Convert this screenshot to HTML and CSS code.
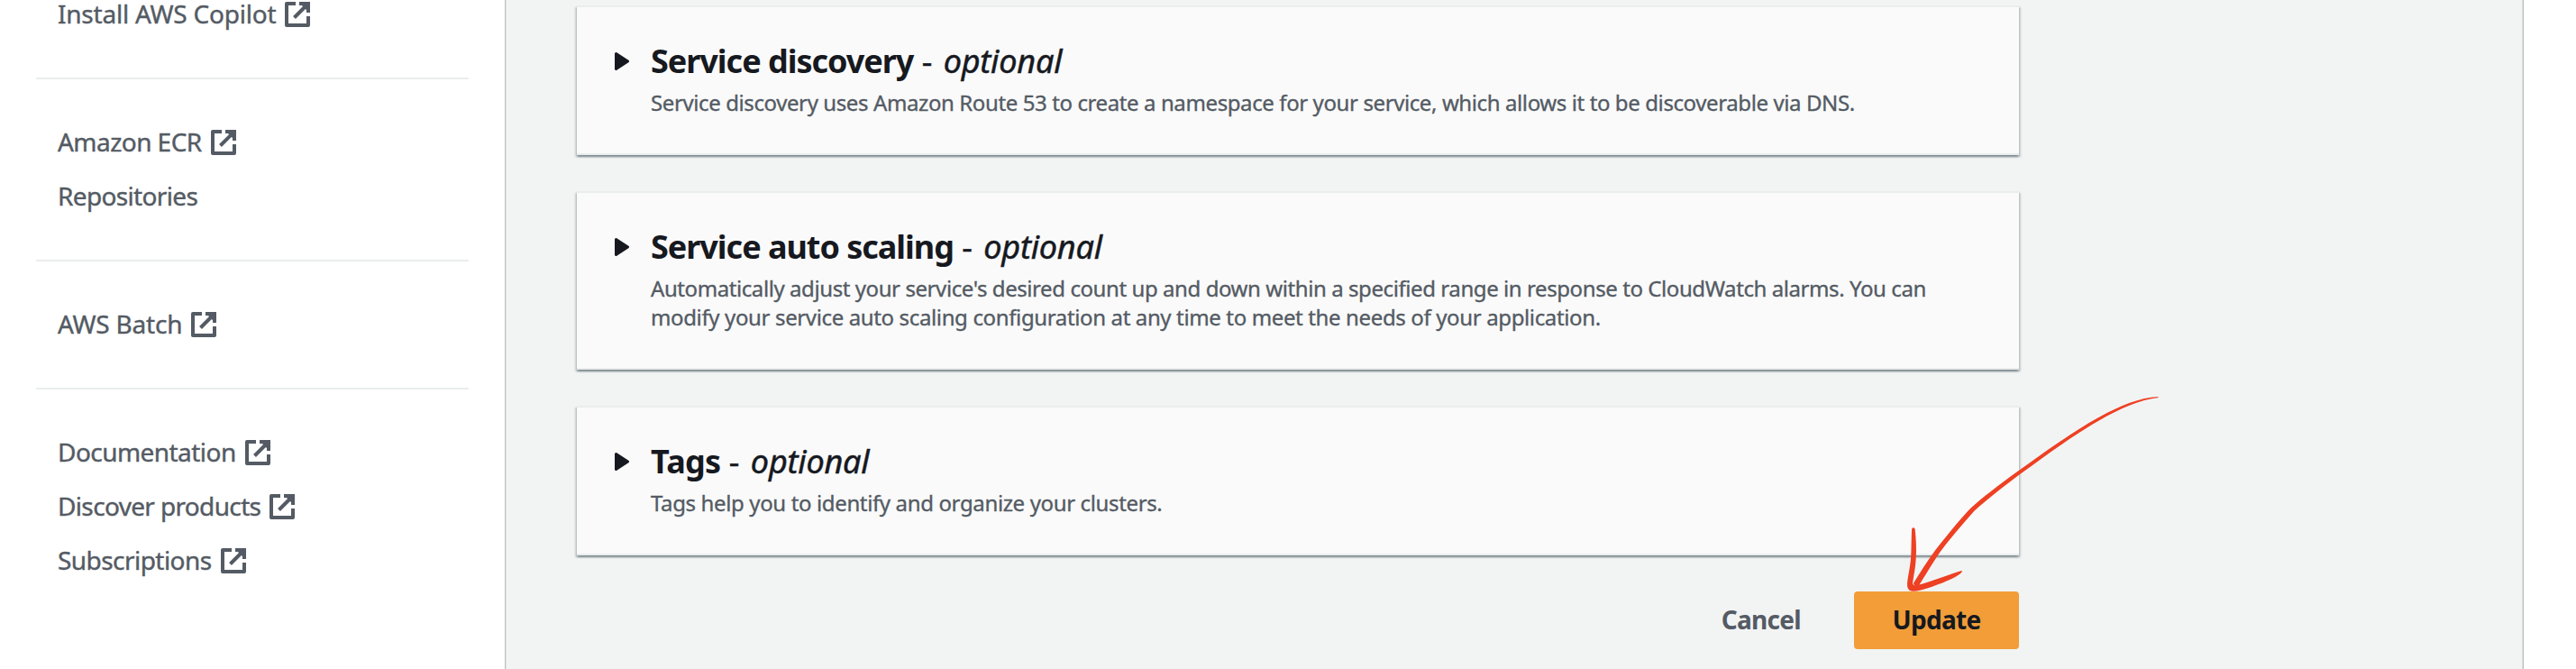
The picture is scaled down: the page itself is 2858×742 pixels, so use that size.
FILE: index.html
```
<!DOCTYPE html>
<html lang="en">
<head>
<meta charset="utf-8">
<title>Update service</title>
<link rel="stylesheet" href="styles.css">
</head>
<body>
<svg class="defs" aria-hidden="true">
  <symbol id="external" viewBox="0 0 28 28">
    <path d="M12 2H2V26H26V16" fill="none" stroke="currentColor" stroke-width="4" stroke-linejoin="round"/>
    <path d="M16 2H26V12" fill="none" stroke="currentColor" stroke-width="4"/>
    <path d="M20 3L25 8" fill="none" stroke="currentColor" stroke-width="3"/>
    <path d="M25 3L10.500 17.500" fill="none" stroke="currentColor" stroke-width="4"/>
  </symbol>
  <symbol id="caret" viewBox="0 0 16 20">
    <path d="M1.500 1.500L14.500 10L1.500 18.500Z" fill="currentColor" stroke="currentColor" stroke-width="3" stroke-linejoin="round"/>
  </symbol>
</svg>
<div class="layout">
  <nav class="sidebar">
    <ul class="group">
      <li><a class="link wide">Install AWS Copilot</a><svg class="ext"><use href="#external"/></svg></li>
    </ul>
    <ul class="group">
      <li><a class="link">Amazon ECR</a><svg class="ext"><use href="#external"/></svg></li>
      <li><a class="link tight">Repositories</a></li>
    </ul>
    <ul class="group">
      <li><a class="link wide">AWS Batch</a><svg class="ext"><use href="#external"/></svg></li>
    </ul>
    <ul class="group">
      <li><a class="link">Documentation</a><svg class="ext"><use href="#external"/></svg></li>
      <li><a class="link tight">Discover products</a><svg class="ext"><use href="#external"/></svg></li>
      <li><a class="link">Subscriptions</a><svg class="ext"><use href="#external"/></svg></li>
    </ul>
  </nav>
  <main class="content">
    <section class="panel">
      <svg class="caret"><use href="#caret"/></svg>
      <div>
        <h2 class="title"><b>Service discovery</b> <span class="dash">-</span> <i>optional</i></h2>
        <p class="desc">Service discovery uses Amazon Route 53 to create a namespace for your service, which allows it to be discoverable via DNS.</p>
      </div>
    </section>
    <section class="panel">
      <svg class="caret"><use href="#caret"/></svg>
      <div>
        <h2 class="title"><b>Service auto scaling</b> <span class="dash">-</span> <i>optional</i></h2>
        <p class="desc"><span class="snug">Automatically adjust your service's desired count up and down within a specified range in response to CloudWatch alarms. You can</span><br><span class="loose">modify your service auto scaling configuration at any time to meet the needs of your application.</span></p>
      </div>
    </section>
    <section class="panel">
      <svg class="caret"><use href="#caret"/></svg>
      <div>
        <h2 class="title"><b class="short">Tags</b> <span class="dash">-</span> <i>optional</i></h2>
        <p class="desc"><span class="loose">Tags help you to identify and organize your clusters.</span></p>
      </div>
    </section>
    <div class="actions">
      <button class="btn cancel">Cancel</button>
      <button class="btn primary">Update</button>
    </div>
  </main>
</div>
<svg class="arrow" viewBox="0 0 1568 966" preserveAspectRatio="none">
  <path d="M1496 60C1440 63 1380 88 1310 130C1230 177 1140 247 1058 310C1000 355 950 396 915 430C885 462 838 525 804 571C778 608 756 648 736 681Q739 692 752 690C770 660 795 615 819 577C845 538 890 482 925 440C965 402 1020 356 1066 319C1150 253 1240 184 1310 141C1380 98 1440 70 1497 63Z"/>
  <path d="M731 500Q736 492 741 500C745 540 746 580 743 612C740 645 734 670 734 683Q738 690 748 687C790 676 850 650 886 639Q891 641 880 650C855 670 800 690 765 702Q735 711 724 704Q716 698 717 680C720 650 728 620 729 580C730 550 730 520 731 500Z"/>
</svg>
</body>
</html>
```
FILE: styles.css
```
* { box-sizing: border-box; }

body {
  margin: 0;
  height: 742px;
  overflow: hidden;
  background: #fff;
  color: #16191f;
  font-family: "Noto Sans", "Open Sans", sans-serif;
}

.defs { position: absolute; width: 0; height: 0; }

.layout { display: flex; width: 2800px; height: 742px; }

.sidebar {
  width: 560px;
  flex: none;
  margin-top: -15px;
  padding: 0 40px;
  color: #545b64;
}

.group { margin: 0; padding: 0 24px; list-style: none; }
.group + .group {
  margin-top: 41px;
  padding-top: 39px;
  border-top: 2px solid #eaeded;
}
.group li { display: flex; align-items: center; height: 60px; }

.link {
  font-size: 28px;
  line-height: 60px;
  letter-spacing: -0.55px;
  white-space: nowrap;
  -webkit-text-stroke: 0.4px currentColor;
}
.link.wide { letter-spacing: -0.22px; }
.link.tight { letter-spacing: -0.65px; }

.ext { width: 28px; height: 28px; margin: 2px 0 0 10px; }

.content {
  flex: 1;
  padding: 6px 560px 0 80px;
  background: #f2f4f4;
  box-shadow: inset 1px 0 #b9bebf, inset 2px 0 #e0e4e4, inset -1px 0 #b9bebf, inset -2px 0 #dde1e1;
}

.panel {
  display: flex;
  width: 1600px;
  margin-bottom: 40px;
  padding: 37px 42px 40px;
  background: #fafafa;
  border-top: 2px solid #eaeded;
  border-bottom: 2px solid #eaeded;
  box-shadow:
    0 2px 2px 0 rgba(0, 28, 36, .3),
    2px 2px 2px 0 rgba(0, 28, 36, .15),
    -2px 2px 2px 0 rgba(0, 28, 36, .15);
}

.caret { flex: none; width: 16px; height: 20px; margin: 13px 24px 0 0; }

.title { margin: 0 0 8px; padding-top: 1px; font-size: 36px; font-weight: 400; line-height: 44px; }
.title b { letter-spacing: -1.03px; }
.title b.short { letter-spacing: -0.7px; }
.title i { margin-left: 3px; letter-spacing: -0.2px; }
.title i, .dash { -webkit-text-stroke: 0.5px currentColor; }

.desc {
  margin: 0;
  color: #545b64;
  font-size: 24px;
  line-height: 32px;
  letter-spacing: -0.395px;
  white-space: nowrap;
  -webkit-text-stroke: 0.35px currentColor;
}
.snug { letter-spacing: -0.42px; }
.loose { letter-spacing: -0.365px; }

.actions { display: flex; justify-content: flex-end; }

.btn {
  height: 64px;
  padding: 0 0 2px;
  border: 0;
  background: none;
  font: 700 28px/62px "Noto Sans", sans-serif;
  letter-spacing: -0.7px;
}
.cancel { margin-right: 59px; color: #545b64; }
.primary { width: 183px; border-radius: 4px; background: #f29d38; color: #16191f; }

/* Hand-drawn pointer lying over the panel and the button */
.arrow { position: absolute; left: 1860px; top: 420px; width: 560px; height: 322px; fill: #ee4023; }
```
